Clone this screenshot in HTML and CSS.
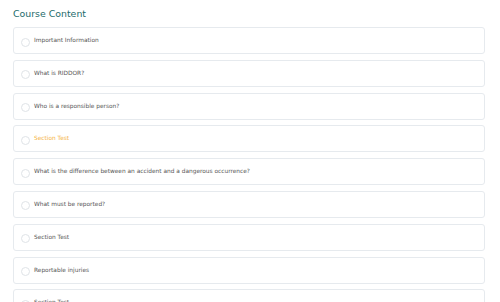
FILE: index.html
```html
<!DOCTYPE html>
<html>

	<head>
		<meta charset="UTF-8">
		<title>Course Content</title>
		<link rel="stylesheet" href="styles.css">
	</head>

	<body>
		<div class="wrap">
			<h2 class="title">Course Content</h2>
			<ul class="lessons">
				<li class="lesson"><span class="dot"></span><span class="name">Important Information</span></li>
				<li class="lesson"><span class="dot"></span><span class="name">What is RIDDOR?</span></li>
				<li class="lesson"><span class="dot"></span><span class="name">Who is a responsible person?</span></li>
				<li class="lesson active"><span class="dot"></span><span class="name">Section Test</span></li>
				<li class="lesson"><span class="dot"></span><span class="name">What is the difference between an accident and a dangerous occurrence?</span></li>
				<li class="lesson"><span class="dot"></span><span class="name">What must be reported?</span></li>
				<li class="lesson"><span class="dot"></span><span class="name">Section Test</span></li>
				<li class="lesson"><span class="dot"></span><span class="name">Reportable injuries</span></li>
				<li class="lesson"><span class="dot"></span><span class="name">Section Test</span></li>
			</ul>
		</div>
	</body>

</html>
```

FILE: styles.css
```css
* {
	margin: 0;
	padding: 0;
	box-sizing: border-box;
}

html,
body {
	width: 100%;
	height: 100%;
	background: #fff;
	overflow: hidden;
}

body {
	font-family: "DejaVu Sans", sans-serif;
}

.wrap {
	padding: 7px 15px 0 13px;
}

.title {
	font-size: 9.4px;
	font-weight: normal;
	color: #1d6b6b;
	line-height: 14px;
	margin-bottom: 6px;
}

.lessons {
	list-style: none;
	display: flex;
	flex-direction: column;
	gap: 5.8px;
}

.lesson {
	height: 27px;
	border: 1px solid #e6eaee;
	border-radius: 3px;
	display: flex;
	align-items: center;
	padding: 0 7px;
	color: #555;
	font-size: 5.85px;
}

.dot {
	width: 9px;
	height: 9px;
	border: 1px solid #dfe3e7;
	border-radius: 50%;
	margin-top: 3px;
	margin-right: 4px;
	flex-shrink: 0;
}

.name {
	margin-bottom: 1px;
}

.active {
	color: #f5b445;
}
```
